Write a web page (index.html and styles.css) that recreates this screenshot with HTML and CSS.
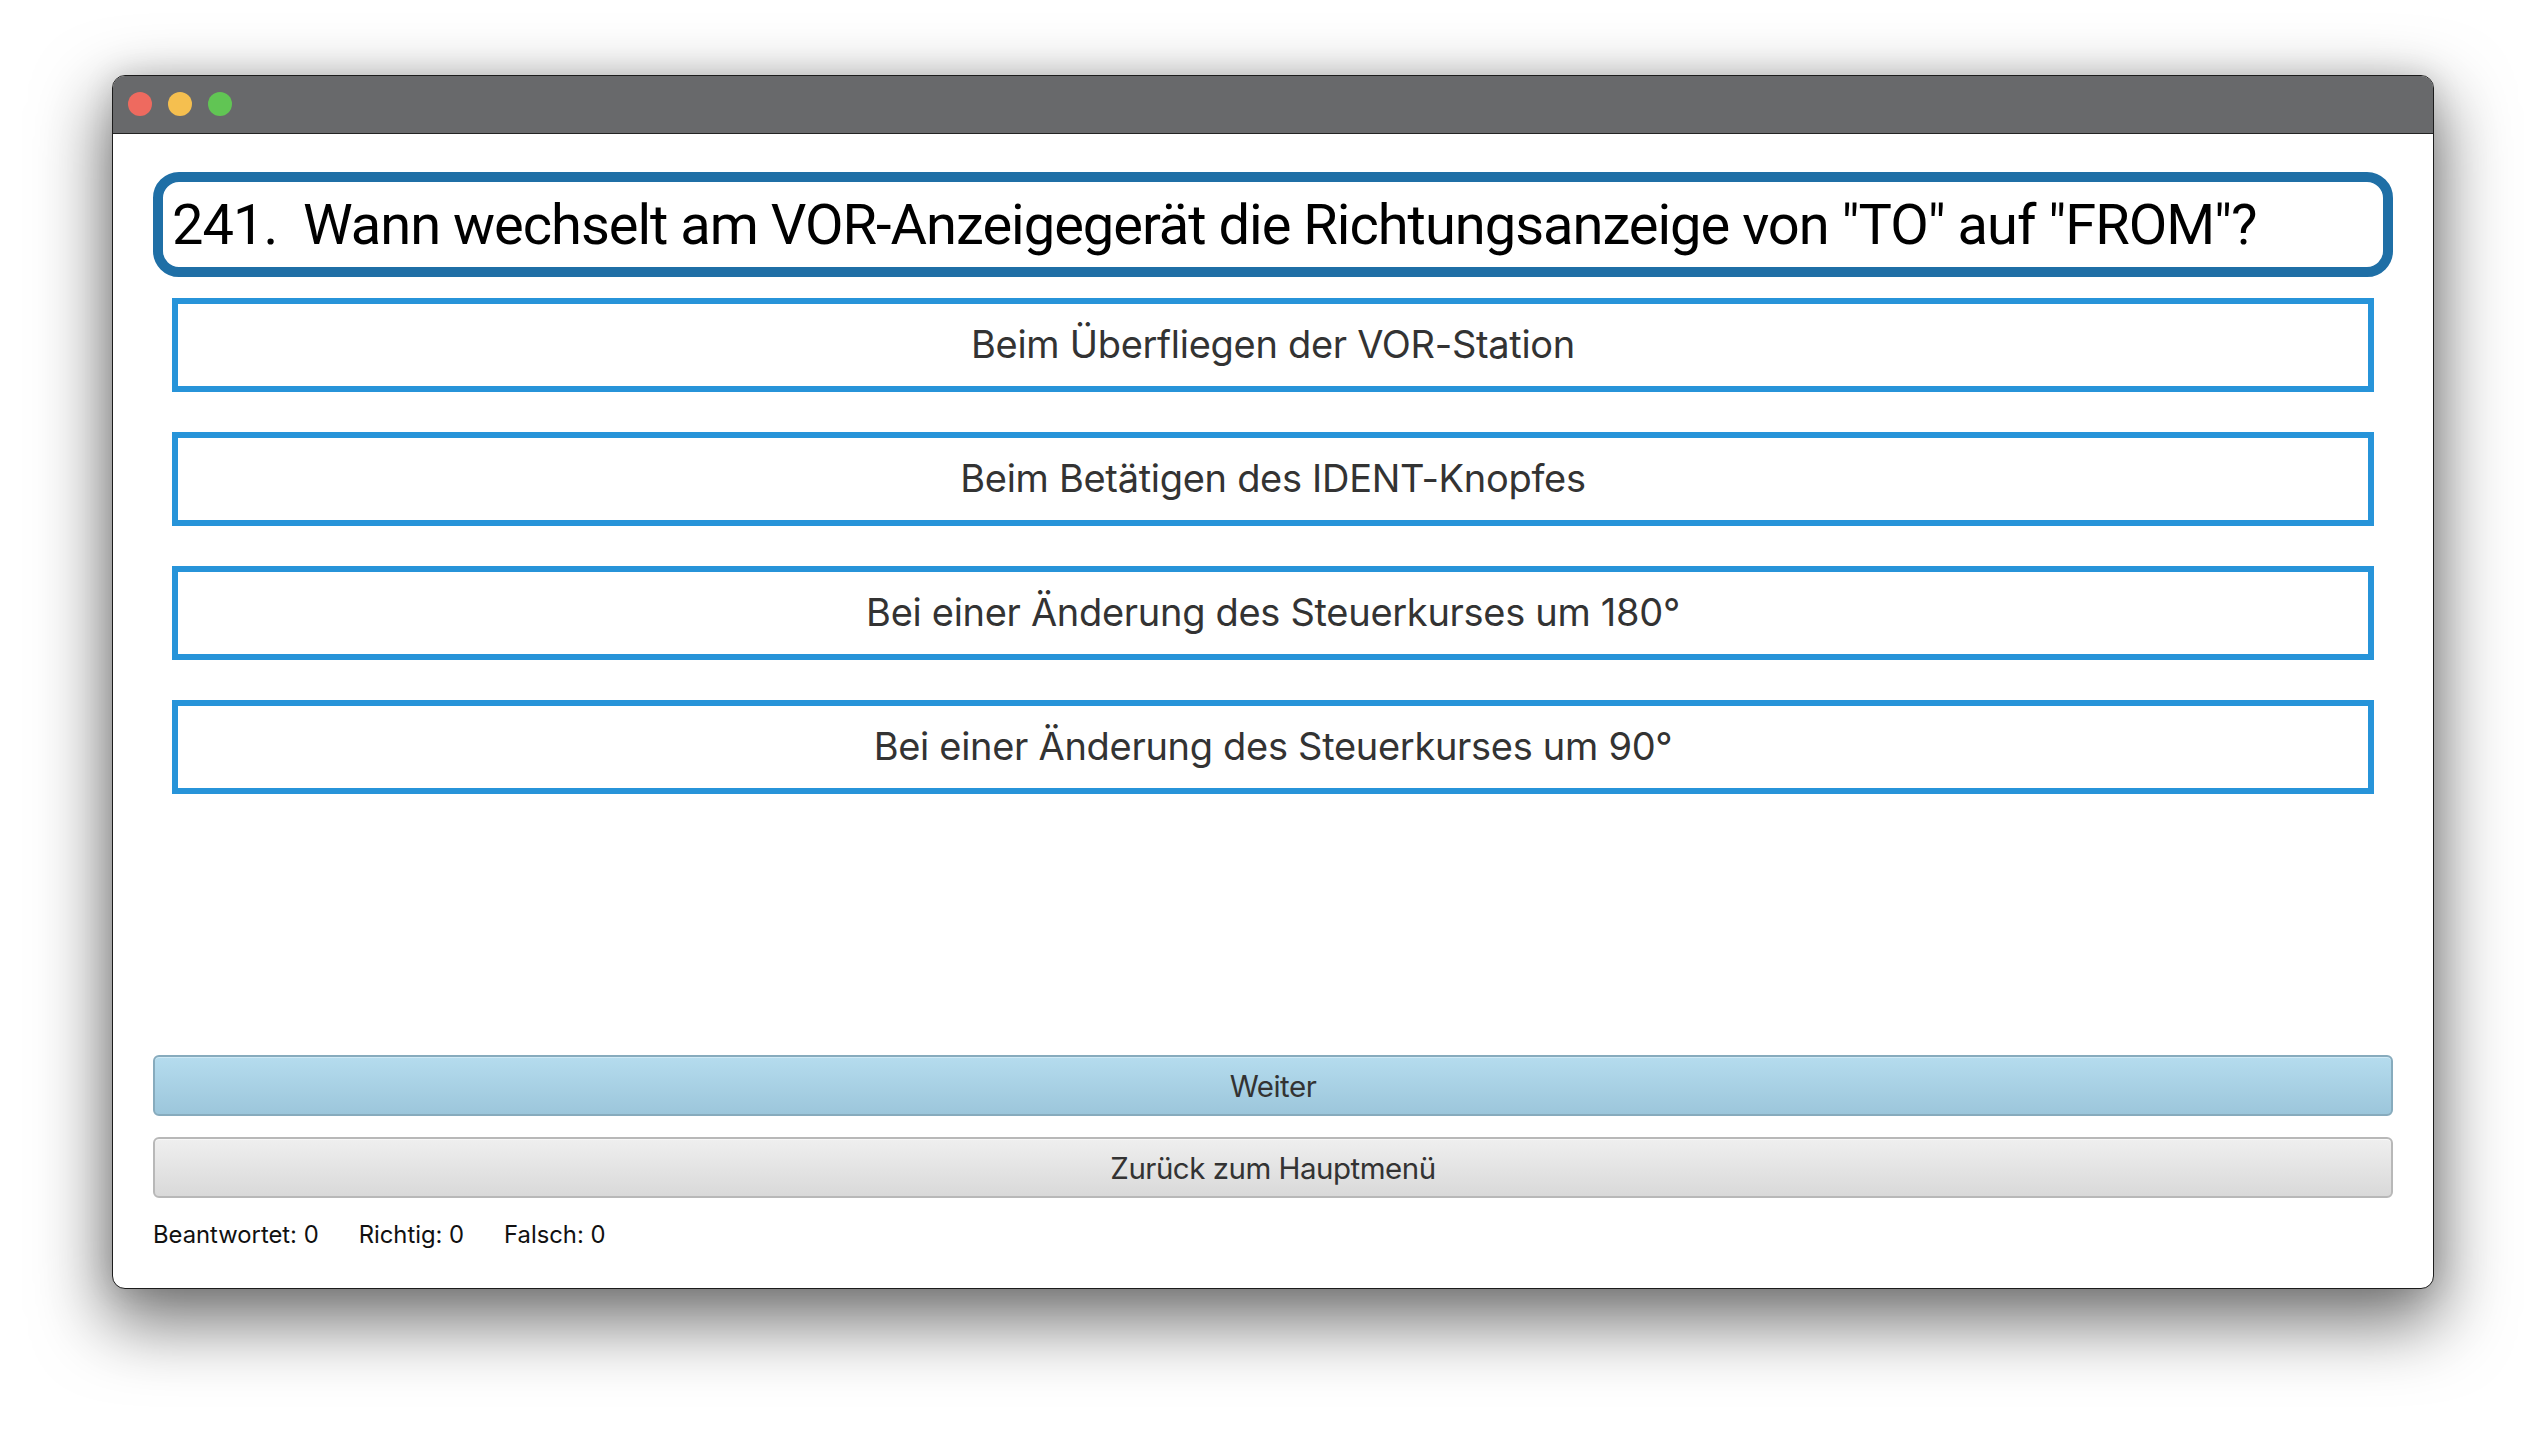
FILE: index.html
```html
<!DOCTYPE html>
<html lang="de">
<head>
<meta charset="utf-8">
<title>Quiz</title>
<link rel="stylesheet" href="styles.css">
</head>
<body>
<div class="window">
  <div class="titlebar">
    <span class="light red"></span>
    <span class="light yellow"></span>
    <span class="light green"></span>
  </div>
  <div class="content">
    <div class="question">241.&nbsp; Wann wechselt am VOR-Anzeigegerät die Richtungsanzeige von "TO" auf "FROM"?</div>
    <div class="answers">
      <div class="answer">Beim Überfliegen der VOR-Station</div>
      <div class="answer">Beim Betätigen des IDENT-Knopfes</div>
      <div class="answer">Bei einer Änderung des Steuerkurses um 180°</div>
      <div class="answer">Bei einer Änderung des Steuerkurses um 90°</div>
    </div>
    <div class="spacer"></div>
    <div class="buttons">
      <div class="btn btn-primary">Weiter</div>
      <div class="btn btn-secondary">Zurück zum Hauptmenü</div>
    </div>
    <div class="status">
      <span>Beantwortet: 0</span>
      <span>Richtig: 0</span>
      <span>Falsch: 0</span>
    </div>
  </div>
</div>
</body>
</html>
```

FILE: styles.css
```css
html, body {
  margin: 0;
  padding: 0;
  background: #ffffff;
}
body {
  width: 2546px;
  height: 1438px;
  overflow: hidden;
  padding: 75px 0 0 112px;
  box-sizing: border-box;
  font-family: Inter, "Noto Sans", sans-serif;
}
.window {
  width: 2322px;
  height: 1214px;
  box-sizing: border-box;
  border: 1px solid #1c1c1c;
  border-radius: 13px;
  background: #ffffff;
  display: flex;
  flex-direction: column;
  overflow: hidden;
  box-shadow: 0 28px 70px 6px rgba(0,0,0,0.55), 0 0 30px rgba(0,0,0,0.12);
}
.titlebar {
  height: 56px;
  flex: none;
  background: #68696b;
  border-bottom: 1px solid #232323;
  display: flex;
  align-items: center;
  gap: 16px;
  padding-left: 15px;
  padding-bottom: 1px;
  box-sizing: content-box;
}
.light {
  width: 24px;
  height: 24px;
  border-radius: 50%;
  display: block;
}
.red { background: #ee6a5f; }
.yellow { background: #f5bf4f; }
.green { background: #61c554; }
.content {
  flex: 1;
  display: flex;
  flex-direction: column;
  padding: 38px 0 39px 0;
}
.question {
  margin: 0 40px;
  height: 105px;
  box-sizing: border-box;
  border: 10px solid #1f6fa6;
  border-radius: 26px;
  padding-left: 9px;
  display: flex;
  align-items: center;
  font-family: Roboto, "Liberation Sans", Arial, sans-serif;
  font-size: 56px;
  letter-spacing: -1px;
  color: #000;
  white-space: nowrap;
  overflow: hidden;
}
.answers {
  margin: 21px 59px 0 59px;
  display: flex;
  flex-direction: column;
  gap: 40px;
}
.answer {
  height: 94px;
  box-sizing: border-box;
  border: 6px solid #2794d9;
  display: flex;
  align-items: center;
  justify-content: center;
  font-size: 38px;
  letter-spacing: -0.3px;
  color: #333;
  padding-bottom: 2px;
}
.spacer { flex: 1; }
.buttons {
  margin: 0 40px;
  display: flex;
  flex-direction: column;
  gap: 21px;
}
.btn {
  height: 61px;
  box-sizing: border-box;
  border-radius: 6px;
  display: flex;
  align-items: center;
  justify-content: center;
  font-size: 29.5px;
  letter-spacing: -0.5px;
  color: #333;
}
.btn-primary {
  border: 2px solid #87abbd;
  background: linear-gradient(#b5dcee, #9cc6db);
  box-shadow: inset 0 1px 0 #cfe9f5;
}
.btn-secondary {
  border: 2px solid #b8b8b8;
  background: linear-gradient(#efefef, #d9d9d9);
  box-shadow: inset 0 1px 0 #f8f8f8;
}
.status {
  margin: 23px 0 0 40px;
  display: flex;
  gap: 40px;
  font-size: 23.8px;
  line-height: 28px;
  color: #111;
}
```
